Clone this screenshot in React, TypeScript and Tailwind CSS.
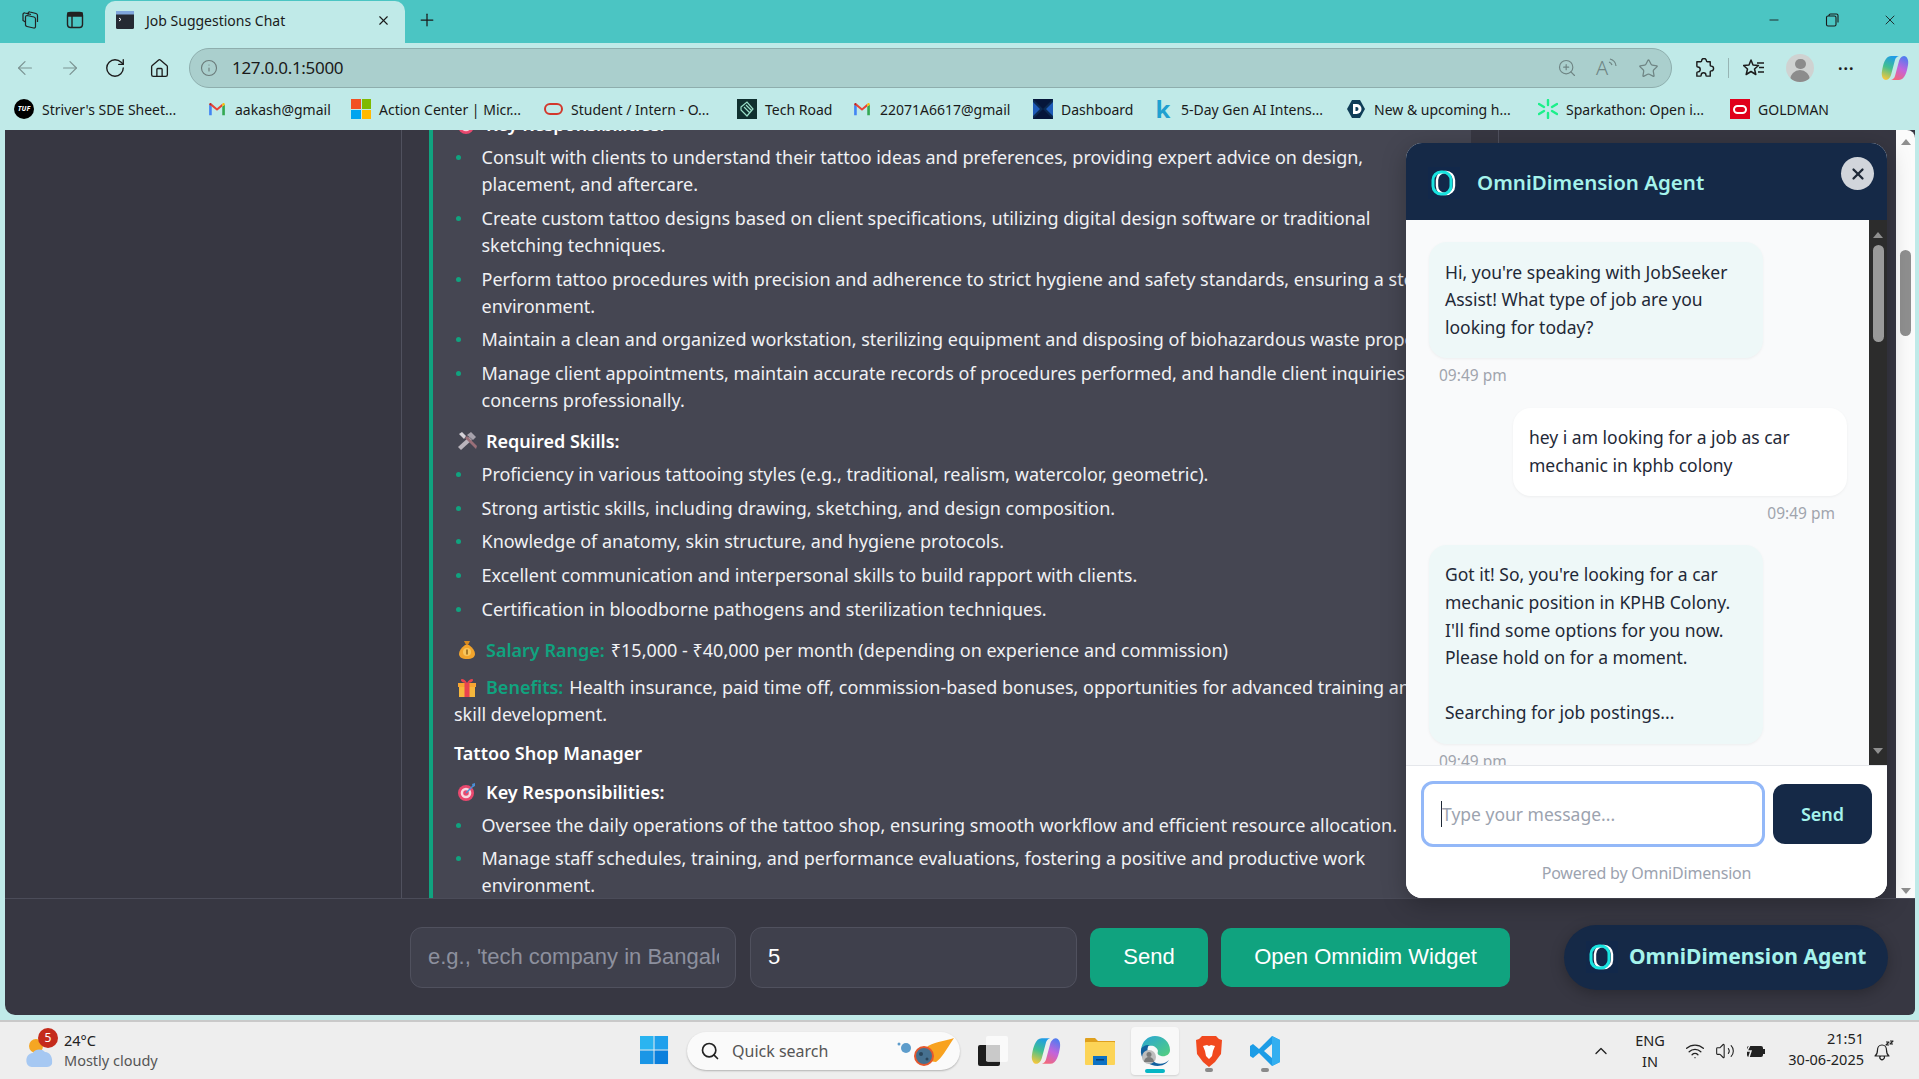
import { ArrowLeft, ArrowRight, RotateCw, Home, Info, ZoomIn, Star, Search, ChevronUp, Wifi, Volume2, Plus, X, Minus } from "lucide-react";
import type { ReactNode } from "react";

const ui = "font-['Noto_Sans','Open_Sans',sans-serif]";

function OmniLogo({ className = "" }: { className?: string }) {
  return (
    <svg viewBox="0 0 32 32" className={className}>
      <rect width="32" height="32" fill="#12284a" />
      <rect x="9" y="5" width="17" height="22" rx="8" fill="none" stroke="#ffffff" strokeWidth="2.4" />
      <rect x="5" y="5" width="18" height="22" rx="8" fill="none" stroke="#19e3e0" strokeWidth="3" />
    </svg>
  );
}

function Gmail() {
  return (
    <svg viewBox="0 0 20 16" className="h-[14px] w-[18px]">
      <path d="M1 15V3l3 2v10z" fill="#4285f4" />
      <path d="M19 15V3l-3 2v10z" fill="#34a853" />
      <path d="M4 5V2l6 5 6-5v3l-6 5z" fill="#ea4335" />
      <path d="M1 3c0-2 2-2.500 3-1v3z" fill="#c5221f" />
      <path d="M19 3c0-2-2-2.500-3-1v3z" fill="#fbbc04" />
    </svg>
  );
}

function Copilot({ className = "", id }: { className?: string; id: string }) {
  return (
    <svg viewBox="0 0 28 28" className={className}>
      <defs>
        <linearGradient id={`${id}a`} x1="0.6" y1="0" x2="0.3" y2="1">
          <stop offset="0" stopColor="#1e9be8" />
          <stop offset="0.5" stopColor="#42c08f" />
          <stop offset="1" stopColor="#f5c73c" />
        </linearGradient>
        <linearGradient id={`${id}b`} x1="0.7" y1="0" x2="0.3" y2="1">
          <stop offset="0" stopColor="#4f7cf0" />
          <stop offset="0.5" stopColor="#c264dc" />
          <stop offset="1" stopColor="#f2687a" />
        </linearGradient>
      </defs>
      <path d="M10 2h8c-2 .5-3.500 2-4 4l-4 15c-.6 2-2.500 5-5 5-3 0-5-4-4-9 1-6 3-15 9-15z" fill={`url(#${id}a)`} />
      <path d="M18 26h-8c2-.5 3.500-2 4-4l4-15c.6-2 2.500-5 5-5 3 0 5 4 4 9-1 6-3 15-9 15z" fill={`url(#${id}b)`} />
    </svg>
  );
}

function Bookmark({ w, icon, label }: { w: string; icon: ReactNode; label: string }) {
  return (
    <div className={`flex shrink-0 items-center ${w}`}>
      <span className="flex w-[20px] shrink-0 justify-center">{icon}</span>
      <span className="ml-[8px] whitespace-nowrap text-[14px] text-[#1a1a1a]">{label}</span>
    </div>
  );
}

function Bookmarks() {
  return (
    <div className="flex h-[42px] shrink-0 items-center bg-[#c0eae8] pl-[14px]">
      <Bookmark w="w-[193px]" label="Striver's SDE Sheet..." icon={<span className="flex h-[20px] w-[20px] items-center justify-center rounded-full bg-black text-[7px] font-bold italic text-white">TUF</span>} />
      <Bookmark w="w-[144px]" label="aakash@gmail" icon={<Gmail />} />
      <Bookmark w="w-[192px]" label="Action Center | Micr..." icon={
        <span className="grid h-[20px] w-[20px] grid-cols-2 gap-[1px]">
          <i className="bg-[#f25022]" /><i className="bg-[#7fba00]" /><i className="bg-[#00a4ef]" /><i className="bg-[#ffb900]" />
        </span>
      } />
      <Bookmark w="w-[194px]" label="Student / Intern - O..." icon={<span className="h-[12px] w-[19px] rounded-[6px] border-[2.5px] border-[#d2382c]" />} />
      <Bookmark w="w-[115px]" label="Tech Road" icon={
        <svg viewBox="0 0 20 20" className="h-[20px] w-[20px]">
          <rect width="20" height="20" fill="#10302f" />
          <path d="M4 8l6-5 6 7-6 7-6-6zM7 8l6 6M9 6l6 6" fill="none" stroke="#9adfc8" strokeWidth="1.2" />
        </svg>
      } />
      <Bookmark w="w-[181px]" label="22071A6617@gmail" icon={<Gmail />} />
      <Bookmark w="w-[120px]" label="Dashboard" icon={
        <svg viewBox="0 0 20 20" className="h-[20px] w-[20px]">
          <rect width="20" height="20" fill="#0b2a52" />
          <path d="M0 0l10 10L20 0zM0 20l10-10 10 10z" fill="#06163a" />
          <path d="M0 3l7 7-7 7zM20 3l-7 7 7 7z" fill="#1d5bb8" />
        </svg>
      } />
      <Bookmark w="w-[193px]" label="5-Day Gen AI Intens..." icon={<span className="text-[24px] font-bold leading-none text-[#20a0d0]">k</span>} />
      <Bookmark w="w-[192px]" label="New & upcoming h..." icon={
        <svg viewBox="0 0 20 20" className="h-[20px] w-[20px]">
          <path d="M6 1h8l5 9-5 9H6l-5-9z" fill="#0f3d57" />
          <path d="M7 5h3.500a5 5 0 010 10H7z" fill="#fff" />
          <path d="M9.500 8h1a2 2 0 010 4h-1z" fill="#0f3d57" />
        </svg>
      } />
      <Bookmark w="w-[192px]" label="Sparkathon: Open i..." icon={
        <svg viewBox="0 0 20 20" className="h-[20px] w-[20px]" stroke="#1bf08a" strokeWidth="2.400" strokeLinecap="round">
          <path d="M10 1v5M10 14v5M1 5l5 3M1 15l5-3M19 5l-5 3M19 15l-5-3" />
        </svg>
      } />
      <Bookmark w="w-[100px]" label="GOLDMAN" icon={
        <span className="flex h-[20px] w-[20px] items-center justify-center bg-[#e0001b]">
          <span className="h-[9px] w-[14px] rounded-[5px] border-2 border-white" />
        </span>
      } />
    </div>
  );
}

function TitleBar() {
  return (
    <div className="flex h-[43px] shrink-0 items-end bg-[#4bc5c3] text-[#1a1a1a]">
      <div className="flex h-[43px] w-[105px] shrink-0 items-center pb-[3px] pl-[20px]">
        <svg viewBox="0 0 20 20" className="h-[20px] w-[20px]" fill="none" stroke="#222" strokeWidth="1.200">
          <path d="M7 5.500l7 1.500a2 2 0 011.500 2v7.500a1.500 1.500 0 01-1.800 1.500L7 16.500A2 2 0 015.500 15V7a1.500 1.500 0 011.500-1.500z" />
          <path d="M5.500 12L3 10.500V4.500A1.500 1.500 0 015 3l6 1.500M8 5V3.500A1.500 1.500 0 0110 2l6 1.500A2 2 0 0117.500 5.500V12" />
        </svg>
        <svg viewBox="0 0 20 20" className="ml-[25px] h-[20px] w-[20px]" fill="none" stroke="#222" strokeWidth="1.400">
          <rect x="2.500" y="2.500" width="15" height="15" rx="3" />
          <path d="M3 3h14v3H3z" fill="#222" />
          <path d="M7 6v11" />
        </svg>
      </div>
      <div className="flex h-[42px] w-[300px] shrink-0 items-center rounded-t-[10px] bg-[#c0eae8] pb-[4px] pl-[11px] pr-[14px]">
        <svg viewBox="0 0 18 18" className="h-[18px] w-[18px] shrink-0">
          <rect width="18" height="18" rx="1.500" fill="#252a33" />
          <rect width="18" height="3.500" fill="#7fa6dc" />
          <path d="M3 7l2 1.500L3 10" fill="none" stroke="#fff" strokeWidth="1" />
        </svg>
        <span className="ml-[12px] whitespace-nowrap text-[14px]">Job Suggestions Chat</span>
        <X className="ml-auto h-[15px] w-[15px]" strokeWidth={1.8} />
      </div>
      <div className="flex h-[43px] flex-1 items-center pb-[3px] pl-[12px]">
        <Plus className="h-[20px] w-[20px]" strokeWidth={1.5} />
        <div className="ml-auto flex items-center">
          <Minus className="h-[14px] w-[14px]" strokeWidth={1.5} />
          <svg viewBox="0 0 14 14" className="ml-[44px] h-[14px] w-[14px]" fill="none" stroke="#1a1a1a" strokeWidth="1.100">
            <rect x="1.500" y="3" width="9.500" height="10" rx="1.500" />
            <path d="M4 3V2.500A1.500 1.500 0 015.500 1h6A1.500 1.500 0 0113 2.500v7" />
          </svg>
          <X className="ml-[43px] mr-[21px] h-[16px] w-[16px]" strokeWidth={1.3} />
        </div>
      </div>
    </div>
  );
}

function Toolbar() {
  return (
    <div className="flex h-[45px] shrink-0 items-center bg-[#c0eae8] pt-[5px] text-[#1c1c1c]">
      <ArrowLeft className="ml-[14px] h-[22px] w-[22px] text-[#7b9392]" strokeWidth={1.3} />
      <ArrowRight className="ml-[23px] h-[22px] w-[22px] text-[#7b9392]" strokeWidth={1.3} />
      <RotateCw className="ml-[23px] h-[22px] w-[22px]" strokeWidth={1.5} />
      <Home className="ml-[23px] h-[21px] w-[21px]" strokeWidth={1.5} />
      <div className="ml-[19px] flex h-[40px] w-[1483px] shrink-0 items-center rounded-full border border-[#8eaead] bg-[#aacfcd] pl-[10px]">
        <Info className="h-[18px] w-[18px] text-[#6b7b7a]" strokeWidth={1.5} />
        <span className="ml-[14px] text-[17px] tracking-[-0.3px] text-[#1a1a1a]">127.0.0.1:5000</span>
        <div className="ml-auto flex items-center pr-[12px] text-[#6f8584]">
          <ZoomIn className="h-[20px] w-[20px]" strokeWidth={1.4} />
          <span className="ml-[19px] flex w-[24px] items-start">
            <span className="text-[20px] font-light leading-none">A</span>
            <svg viewBox="0 0 10 12" className="h-[12px] w-[10px]" fill="none" stroke="currentColor" strokeWidth="1.200">
              <path d="M1 4a5 5 0 013 3M2 1a8 8 0 016 7" />
            </svg>
          </span>
          <Star className="ml-[18px] h-[21px] w-[21px]" strokeWidth={1.4} />
        </div>
      </div>
      <svg viewBox="0 0 22 22" className="ml-[22px] h-[21px] w-[21px]" fill="none" stroke="#1c1c1c" strokeWidth="1.500" strokeLinejoin="round">
        <path d="M8 3a2.500 2.500 0 015 0c0 .8.500 1 1 1h3v3.500c0 .5.300 1 1 1a2.500 2.500 0 010 5c-.7 0-1 .5-1 1V19h-3.500c-.5 0-1-.3-1-1a2.500 2.500 0 00-5 0c0 .7-.5 1-1 1H3v-3.500c0-.5.400-1 1-1a2.500 2.500 0 000-5c-.6 0-1-.5-1-1V4h4c.5 0 1-.3 1-1z" />
      </svg>
      <span className="ml-[13px] h-[20px] w-px bg-[#97b5b4]" />
      <svg viewBox="0 0 22 20" className="ml-[14px] h-[20px] w-[22px]" fill="none" stroke="#1c1c1c" strokeWidth="1.500" strokeLinejoin="round">
        <path d="M8 2l2 5 5.500.5-4 3.500 1.300 5.500L8 13.500 3.200 16.500 4.500 11l-4-3.500L6 7z" />
        <path d="M14 5h7M16 9.500h5M15 14h6" />
      </svg>
      <span className="ml-[21px] flex h-[28px] w-[28px] flex-col items-center overflow-hidden rounded-full bg-[#cfd2d1]">
        <span className="mt-[5px] h-[11px] w-[11px] rounded-full bg-[#8c8c8c]" />
        <span className="mt-[1px] h-[14px] w-[20px] rounded-t-full bg-[#8c8c8c]" />
      </span>
      <span className="ml-[24px] text-[16px] font-bold leading-none tracking-[1px]">···</span>
      <Copilot id="cpt" className="ml-[26px] h-[28px] w-[28px]" />
    </div>
  );
}

function Target() {
  return (
    <svg viewBox="0 0 20 20" className="h-[20px] w-[20px]">
      <circle cx="9" cy="11" r="8" fill="#e9486e" />
      <circle cx="9" cy="11" r="5.300" fill="#f7d7df" />
      <circle cx="9" cy="11" r="2.800" fill="#e9486e" />
      <path d="M9 11l8-8" stroke="#4a8fd6" strokeWidth="1.500" />
      <path d="M15 2l3-1v3l-2 1z" fill="#4a8fd6" />
    </svg>
  );
}

function Tools() {
  return (
    <svg viewBox="0 0 20 20" className="h-[20px] w-[20px]">
      <path d="M1 16l11-10 3 3L4 19z" fill="#b9b4bc" />
      <path d="M10 4l4-3 5 5-3 3z" fill="#a7a2ac" />
      <path d="M18 17L8 7l2-2 10 10-1 3z" fill="#9a6f78" />
      <path d="M2 3l3-2 4 4-2 3z" fill="#d5d2d8" />
    </svg>
  );
}

function MoneyBag() {
  return (
    <svg viewBox="0 0 20 20" className="h-[20px] w-[20px]">
      <path d="M7 1h6l-2 4H9z" fill="#d98a1e" />
      <path d="M8 5h4c4 3 6 6 6 9 0 3-3 5-8 5s-8-2-8-5c0-3 2-6 6-9z" fill="#f2a42c" />
      <circle cx="10" cy="12" r="4" fill="#f9c65c" />
      <rect x="9.300" y="9.500" width="1.400" height="5" fill="#8a5a10" />
    </svg>
  );
}

function Gift() {
  return (
    <svg viewBox="0 0 20 20" className="h-[20px] w-[20px]">
      <rect x="2" y="8" width="16" height="11" fill="#f6b73c" />
      <rect x="1" y="5" width="18" height="4" fill="#f7a531" />
      <rect x="7.500" y="5" width="5" height="14" fill="#e9434f" />
      <path d="M10 5C7 5 4 4 4 2c0-2 4-1 6 3 2-4 6-5 6-3 0 2-3 3-6 3z" fill="#e9434f" />
    </svg>
  );
}

function Bullets({ items }: { items: string[] }) {
  return (
    <ul className="pb-[7px]">
      {items.map((t) => (
        <li key={t} className="relative mb-[6.75px] pl-[27.500px]">
          <span className="absolute left-[1.500px] top-[11px] h-[5px] w-[5px] rounded-full bg-[#10a37f]" />
          {t}
        </li>
      ))}
    </ul>
  );
}

function Heading({ icon, children }: { icon: ReactNode; children: ReactNode }) {
  return (
    <div className="mb-[6px] flex items-center font-semibold text-white">
      <span className="ml-[3px] mr-[9px] flex w-[20px] justify-center">{icon}</span>
      {children}
    </div>
  );
}

function JobCard() {
  return (
    <div className="-mt-[19px] border-l-4 border-[#10a37f] bg-[#454652] pb-10 pl-[21px] pr-[21px] text-[18px] leading-[27px] text-[#f0f1f4]">
      <Heading icon={<Target />}>Key Responsibilities:</Heading>
      <Bullets items={[
        "Consult with clients to understand their tattoo ideas and preferences, providing expert advice on design, placement, and aftercare.",
        "Create custom tattoo designs based on client specifications, utilizing digital design software or traditional sketching techniques.",
        "Perform tattoo procedures with precision and adherence to strict hygiene and safety standards, ensuring a sterile environment.",
        "Maintain a clean and organized workstation, sterilizing equipment and disposing of biohazardous waste properly.",
        "Manage client appointments, maintain accurate records of procedures performed, and handle client inquiries and concerns professionally.",
      ]} />
      <Heading icon={<Tools />}>Required Skills:</Heading>
      <Bullets items={[
        "Proficiency in various tattooing styles (e.g., traditional, realism, watercolor, geometric).",
        "Strong artistic skills, including drawing, sketching, and design composition.",
        "Knowledge of anatomy, skin structure, and hygiene protocols.",
        "Excellent communication and interpersonal skills to build rapport with clients.",
        "Certification in bloodborne pathogens and sterilization techniques.",
      ]} />
      <p className="mb-[10px] flex items-center">
        <span className="ml-[3px] mr-[9px] flex w-[20px] justify-center"><MoneyBag /></span>
        <b className="mr-[6px] font-semibold text-[#10a37f]">Salary Range:</b>₹15,000 - ₹40,000 per month (depending on experience and commission)
      </p>
      <p className="mb-[12px]">
        <span className="ml-[3px] mr-[9px] inline-flex w-[20px] justify-center align-[-4px]"><Gift /></span>
        <b className="mr-[6px] font-semibold text-[#10a37f]">Benefits:</b>Health insurance, paid time off, commission-based bonuses, opportunities for advanced training and skill development.
      </p>
      <p className="mb-[12px] font-semibold text-white">Tattoo Shop Manager</p>
      <Heading icon={<Target />}>Key Responsibilities:</Heading>
      <Bullets items={[
        "Oversee the daily operations of the tattoo shop, ensuring smooth workflow and efficient resource allocation.",
        "Manage staff schedules, training, and performance evaluations, fostering a positive and productive work environment.",
      ]} />
    </div>
  );
}

function Arrow({ down = false, className = "" }: { down?: boolean; className?: string }) {
  return (
    <svg viewBox="0 0 12 8" className={`h-[8px] w-[12px] ${className}`}>
      <path d={down ? "M1 1h10L6 7z" : "M1 7h10L6 1z"} fill="#8f8f8f" />
    </svg>
  );
}

function Bubble({ children, me = false }: { children: ReactNode; me?: boolean }) {
  return (
    <div className={`w-[334px] rounded-[18px] px-[16px] py-[16.500px] text-[17.500px] leading-[27.600px] text-[#1f2937] shadow-[0_1px_3px_rgba(0,0,0,0.05)] ${me ? "ml-auto mr-[22px] bg-white" : "ml-[23px] bg-[#eef8f8]"}`}>
      {children}
    </div>
  );
}

function Widget() {
  return (
    <div className={`absolute left-[1401px] top-[13px] flex h-[755px] w-[481px] flex-col overflow-hidden rounded-[16px] bg-white shadow-[0_6px_24px_rgba(0,0,0,0.25)] ${ui}`}>
      <div className="flex h-[77px] shrink-0 items-start bg-[#152947] pl-[22px]">
        <OmniLogo className="mt-[24px] h-[32px] w-[32px]" />
        <span className="ml-[17px] mt-[24px] text-[20.500px] font-semibold text-[#a5f3ec]">OmniDimension Agent</span>
        <span className="ml-auto mr-[13px] mt-[14px] flex h-[33px] w-[33px] items-center justify-center rounded-full bg-[#d1d5db]">
          <X className="h-[18px] w-[18px] text-[#1f2937]" strokeWidth={3} />
        </span>
      </div>
      <div className="flex h-[545px] shrink-0">
        <div className="h-full flex-1 overflow-hidden bg-[#f9fafb] pt-[22px]">
          <Bubble>Hi, you're speaking with JobSeeker Assist! What type of job are you looking for today?</Bubble>
          <div className="ml-[33px] mt-[7px] text-[15.500px] leading-[21px] text-[#a0a4ad]">09:49 pm</div>
          <div className="mt-[22px]" />
          <Bubble me>hey i am looking for a job as car mechanic in kphb colony</Bubble>
          <div className="mr-[34px] mt-[7px] text-right text-[15.500px] leading-[21px] text-[#a0a4ad]">09:49 pm</div>
          <div className="mt-[21px]" />
          <Bubble>
            Got it! So, you're looking for a car mechanic position in KPHB Colony. I'll find some options for you now. Please hold on for a moment.
            <br /><br />
            Searching for job postings...
          </Bubble>
          <div className="ml-[33px] mt-[7px] text-[15.500px] leading-[21px] text-[#a0a4ad]">09:49 pm</div>
        </div>
        <div className="flex w-[18px] shrink-0 flex-col items-center bg-[#2c2c2c] pt-[11px]">
          <Arrow />
          <span className="mt-[6px] h-[97px] w-[11px] rounded-full bg-[#9a9a9a]" />
          <Arrow down className="mb-[10px] mt-auto" />
        </div>
      </div>
      <div className="flex flex-1 flex-col border-t border-[#e5e7eb] bg-white">
        <div className="flex items-center pl-[15px] pt-[15px]">
          <div className="flex h-[66px] w-[344px] items-center rounded-[12px] border-[3px] border-[#93b8f8] pl-[17px] text-[17.500px] text-[#9ca3af]">
            <span className="h-[26px] w-px bg-[#1f2937]" />Type your message...
          </div>
          <span className="ml-[8px] flex h-[60px] w-[99px] items-center justify-center rounded-[12px] bg-[#152947] text-[18px] font-semibold text-[#a5f3ec]">Send</span>
        </div>
        <div className="mt-[14px] text-center text-[16px] tracking-[-0.2px] text-[#9ca3af]">Powered by OmniDimension</div>
      </div>
    </div>
  );
}

function BottomBar() {
  return (
    <div className="flex h-[117px] shrink-0 items-center border-t border-[#4b4c59] pl-[405px] font-['Liberation_Sans',sans-serif] text-[22px]">
      <div className="h-[61px] w-[326px] overflow-hidden rounded-[12px] border border-[#50515e] bg-[#3f404c] pl-[17px] pr-[16px] leading-[57px] text-[#8d909e]">
        <div className="overflow-hidden whitespace-nowrap">e.g., 'tech company in Bangalore'</div>
      </div>
      <div className="ml-[14px] h-[61px] w-[327px] rounded-[12px] border border-[#50515e] bg-[#3f404c] pl-[17px] leading-[57px] text-white">5</div>
      <span className="ml-[13px] flex h-[59px] w-[118px] items-center justify-center rounded-[10px] bg-[#10a37f] pb-[2px] text-[22px] text-white">Send</span>
      <span className="ml-[13px] flex h-[59px] w-[289px] items-center justify-center rounded-[10px] bg-[#10a37f] pb-[2px] text-[22px] text-white">Open Omnidim Widget</span>
      <span className={`ml-[54px] flex h-[65px] w-[324px] items-center rounded-full bg-[#152947] pl-[22px] text-[21px] font-bold text-[#a5f3ec] shadow-[0_4px_14px_rgba(0,0,0,0.25)] ${ui}`}>
        <OmniLogo className="h-[32px] w-[32px]" />
        <span className="ml-[11px] whitespace-nowrap">OmniDimension Agent</span>
      </span>
    </div>
  );
}

function Page() {
  return (
    <div className="relative flex min-h-0 flex-1 flex-col overflow-hidden rounded-bl-[10px] rounded-br-[6px] bg-[#373742]">
      <div className="flex h-[768px] shrink-0">
        <div className="w-[397px] shrink-0 border-r border-[#50515e]" />
        <div className="w-[1097px] shrink-0 overflow-hidden border-r border-[#50515e] px-[27px]">
          <JobCard />
        </div>
        <div className="flex-1" />
        <div className="flex w-[19px] shrink-0 flex-col items-center rounded-tr-[8px] bg-[#fbfbfb] pt-[8px]">
          <Arrow />
          <span className="mt-[104px] h-[86px] w-[11px] rounded-full bg-[#8f8f8f]" />
          <Arrow down className="mb-[3px] mt-auto" />
        </div>
      </div>
      <BottomBar />
      <Widget />
    </div>
  );
}

function TaskIcons() {
  return (
    <>
      <svg viewBox="0 0 30 30" className="h-[29px] w-[29px] shrink-0">
        <rect width="14" height="14" fill="#2ab4f0" />
        <rect x="15" width="14" height="14" fill="#1fa0ec" />
        <rect y="15" width="14" height="14" fill="#1a96e6" />
        <rect x="15" y="15" width="14" height="14" fill="#0b7fdc" />
      </svg>
      <div className="ml-[18px] flex h-[38px] w-[273px] shrink-0 items-center rounded-full bg-[#fafafa] pl-[13px] shadow-[0_1px_2px_rgba(0,0,0,0.25)]">
        <Search className="h-[20px] w-[20px] text-[#222]" strokeWidth={2} />
        <span className="ml-[12px] text-[16px] text-[#555]">Quick search</span>
        <svg viewBox="0 0 60 30" className="ml-auto mr-[4px] h-[30px] w-[60px]">
          <circle cx="10" cy="12" r="5" fill="#5d9ccb" />
          <circle cx="3" cy="8" r="1.500" fill="#5d9ccb" />
          <path d="M58 2C50 5 42 5 32 10l-8 14 16 2c6-4 10-12 18-24z" fill="#f8a21f" />
          <circle cx="28" cy="20" r="9" fill="#46708f" stroke="#e4572e" strokeWidth="2" />
          <circle cx="25" cy="18" r="2" fill="#2a455b" />
          <circle cx="31" cy="23" r="1.500" fill="#2a455b" />
        </svg>
      </div>
      <div className="relative ml-[18px] h-[30px] w-[30px] shrink-0">
        <span className="absolute bottom-0 left-0 h-[21px] w-[22px] rounded-[2px] bg-[#1d1d1d]" />
        <span className="absolute right-0 top-0 h-[26px] w-[22px] rounded-[2px] bg-white/70" />
        <span className="absolute bottom-[5px] left-[8px] h-[16px] w-[14px] bg-[#c9c9c9]" />
      </div>
      <Copilot id="cpk" className="ml-[23px] h-[30px] w-[30px] shrink-0" />
      <svg viewBox="0 0 30 28" className="ml-[24px] h-[28px] w-[30px] shrink-0">
        <path d="M0 2a1 1 0 011-1h9l3 3h17v5H0z" fill="#dfa01e" />
        <rect y="5" width="30" height="23" rx="1" fill="#fcd457" />
        <rect x="8" y="19" width="14" height="9" fill="#0e72c4" />
        <rect x="11" y="22" width="8" height="1.500" fill="#0a3f72" />
      </svg>
      <div className="relative ml-[16px] flex h-[48px] w-[48px] shrink-0 items-center justify-center rounded-[4px] bg-[#f8f8f8] shadow-[0_1px_2px_rgba(0,0,0,0.12)]">
        <svg viewBox="0 0 32 32" className="h-[32px] w-[32px]">
          <defs>
            <linearGradient id="edg" x1="0" y1="0" x2="1" y2="1">
              <stop offset="0" stopColor="#27a4d8" />
              <stop offset="1" stopColor="#55d07c" />
            </linearGradient>
          </defs>
          <path d="M2 15C3 6 9 1 16 1c8 0 15 6 15 14 0 5-5 7-9 6-3-1-4-2-3-5-1-4-5-6-9-5-4 0-7 2-8 4z" fill="url(#edg)" />
          <path d="M2 15c0-3 4-5 8-5-3 3-2 13 7 18 5 2 10 0 13-3-4 6-11 7-17 5C6 28 1 22 2 15z" fill="#12619f" />
          <circle cx="10" cy="22" r="7" fill="#bdbdbd" />
          <circle cx="10" cy="19.500" r="2.500" fill="#7a7a7a" />
          <path d="M5 27a5 5 0 0110 0z" fill="#7a7a7a" />
        </svg>
        <span className="absolute bottom-[2px] left-[14px] h-[4px] w-[20px] rounded-full bg-[#06b6c4]" />
      </div>
      <div className="relative ml-[17px] flex h-[48px] w-[26px] shrink-0 items-center justify-center">
        <svg viewBox="0 0 26 32" className="h-[32px] w-[26px]">
          <path d="M6 1h14l3 3 3 1-1 14-6 8-6 5-6-5-6-8L0 5l3-1z" fill="#f1491f" />
          <path d="M7 11l4-1 2 1 2-1 4 1-2 5-1 5-3 3-3-3-1-5z" fill="#fff" />
        </svg>
        <span className="absolute bottom-[3px] left-[9px] h-[4px] w-[8px] rounded-full bg-[#8a8a8a]" />
      </div>
      <div className="relative ml-[27px] flex h-[48px] w-[32px] shrink-0 items-center justify-center">
        <svg viewBox="0 0 32 32" className="h-[32px] w-[32px]">
          <path d="M23 1l8 4v22l-8 4-13-13-6 5-3-2V11l3-2 6 5zM23 9l-8 7 8 7z" fill="#1c9ce6" fillRule="evenodd" />
          <path d="M23 1l8 4v22l-8 4z" fill="#33aff0" />
        </svg>
        <span className="absolute bottom-[3px] left-[12px] h-[4px] w-[8px] rounded-full bg-[#8a8a8a]" />
      </div>
    </>
  );
}

function Taskbar() {
  return (
    <div className="flex h-[59px] shrink-0 items-center border-t-2 border-[#c9c9c9] bg-[#eeeeee] text-[#222]">
      <div className="flex w-[640px] shrink-0 items-center pl-[25px]">
        <div className="relative h-[38px] w-[30px] shrink-0">
          <svg viewBox="0 0 30 38" className="h-[38px] w-[30px]">
            <circle cx="11" cy="14" r="7" fill="#f5a623" />
            <path d="M2 32c-2-6 1-11 6-11 1-4 9-5 12-1 5 0 8 5 7 12-1 2-3 3-5 3H7c-2 0-4-1-5-3z" fill="#a6c8f2" />
          </svg>
          <span className="absolute left-[13px] top-[-4px] flex h-[20px] w-[20px] items-center justify-center rounded-full bg-[#c42b1c] text-[12px] text-white">5</span>
        </div>
        <div className="mb-[2px] ml-[9px] text-[14.500px] leading-[20px]">
          <div>24°C</div>
          <div className="text-[#555]">Mostly cloudy</div>
        </div>
      </div>
      <TaskIcons />
      <div className="ml-auto flex items-center">
        <ChevronUp className="h-[20px] w-[20px]" strokeWidth={1.6} />
        <div className="ml-[21px] w-[36px] text-center text-[14.500px] leading-[21px]">ENG<br />IN</div>
        <Wifi className="ml-[17px] h-[20px] w-[20px]" strokeWidth={1.6} />
        <Volume2 className="ml-[10px] h-[20px] w-[20px]" strokeWidth={1.3} />
        <svg viewBox="0 0 22 18" className="ml-[9px] h-[18px] w-[22px]">
          <rect x="3" y="4" width="16" height="11" rx="2" fill="#222" />
          <rect x="19" y="7" width="2" height="5" fill="#222" />
          <path d="M7 1L3 9h4l-2 6" fill="none" stroke="#eee" strokeWidth="1.500" />
        </svg>
        <div className="mb-[3px] ml-[8px] w-[90px] text-right text-[14.500px] leading-[21px]">21:51<br />30-06-2025</div>
        <svg viewBox="0 0 20 22" className="ml-[10px] mr-[25px] h-[22px] w-[20px]" fill="none" stroke="#222" strokeWidth="1.200" strokeLinejoin="round">
          <path d="M8 5c-3 0-4.500 2.500-4.500 5 0 3-1 5-2.500 6h14c-1.500-1-2.500-3-2.500-6 0-2.500-1.500-5-4.500-5zM6.500 16a2 2 0 003 3 2 2 0 00.5-3" />
          <path d="M12 2h3l-3 3h3M16 1h3l-3 3h3" />
        </svg>
      </div>
    </div>
  );
}

export default function App() {
  return (
    <div className={`flex h-screen w-screen flex-col overflow-hidden bg-[#c0eae8] ${ui}`}>
      <TitleBar />
      <Toolbar />
      <Bookmarks />
      <div className="flex min-h-0 flex-1 pb-[5px] pl-[5px] pr-[4px]">
        <Page />
      </div>
      <Taskbar />
    </div>
  );
}
